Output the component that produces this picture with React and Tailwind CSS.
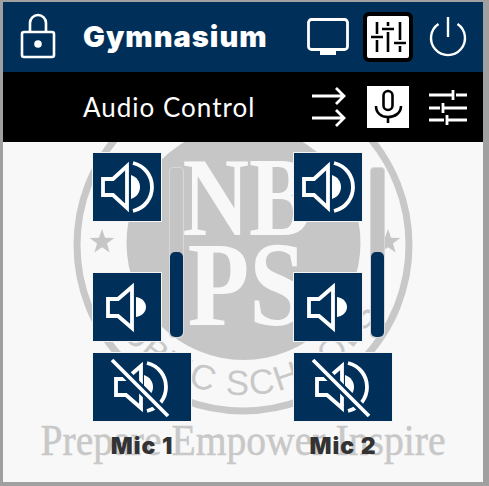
import React from 'react';

const NAVY = '#003059';

const Lock = () => (
  <svg width="36" height="48" viewBox="0 0 36 48" fill="none" stroke="white" strokeWidth="2.6">
    <rect x="2" y="19" width="32" height="25" rx="2" />
    <path d="M10 19V10a8 8 0 0 1 16 0v9" />
    <circle cx="18" cy="31" r="3.8" fill="white" stroke="none" />
  </svg>
);

const Monitor = () => (
  <svg width="42" height="38" viewBox="0 0 42 38" fill="none">
    <rect x="1.5" y="1.5" width="39" height="30" rx="3" stroke="white" strokeWidth="2.8" />
    <rect x="13" y="32" width="16" height="5" fill="white" />
  </svg>
);

const Mixer = () => (
  <svg width="42" height="42" viewBox="0 0 42 42" stroke="black" strokeWidth="2.6" fill="none">
    <path d="M10 6v12M10 24v12M21 6v4M21 16v20M33 6v18M33 30v6" />
    <path d="M4 21h12M15 13h12M27 27h12" />
  </svg>
);

const Power = () => (
  <svg width="40" height="40" viewBox="0 0 40 40" fill="none" stroke="white" strokeWidth="2.4">
    <path d="M10.5 7A17 17 0 1 0 29.5 7" />
    <path d="M20 0v20" />
  </svg>
);

const Arrows = () => (
  <svg width="36" height="40" viewBox="0 0 36 40" fill="none" stroke="white" strokeWidth="2.8">
    <path d="M1 9h32M25 1l8 8-8 8" />
    <path d="M1 31h32M25 23l8 8-8 8" />
  </svg>
);

const Mic = () => (
  <svg width="42" height="42" viewBox="0 0 42 42" fill="none" stroke="black" strokeWidth="2.6">
    <rect x="16.5" y="5" width="9" height="19" rx="4.5" />
    <path d="M9 20c0 7 5 11 12 11s13-4 13-11" />
    <path d="M21 31v6" />
  </svg>
);

const Sliders = () => (
  <svg width="40" height="36" viewBox="0 0 40 36" fill="none" stroke="white" strokeWidth="2.8">
    <path d="M1 6h24M25 1v10M28 6h11" />
    <path d="M1 19h11M15 14v10M15 19h24" />
    <path d="M1 31h15M19 26v10M19 31h20" />
  </svg>
);

const VolUp = () => (
  <svg width="68" height="68" viewBox="0 0 68 68" fill="none">
    <path d="M10 26h10L34 13v42L20 42H10z" stroke="white" strokeWidth="3.8" />
    <path d="M38 22c6 2 9 7 9 12s-3 10-9 12z" fill="white" />
    <path d="M40 10c12 3 19 13 19 24s-7 21-19 24" stroke="white" strokeWidth="3.8" />
  </svg>
);

const VolDown = () => (
  <svg width="68" height="68" viewBox="0 0 68 68" fill="none">
    <path d="M15 26h10L39 14v41L25 43H15z" stroke="white" strokeWidth="3.8" />
    <path d="M43 24c6 1 10 5 10 10s-4 9-10 10z" fill="white" />
  </svg>
);

const Mute = () => (
  <svg width="98" height="68" viewBox="0 0 98 68" fill="none">
    <path d="M23 26h10L48 13v42L33 42H23z" stroke="white" strokeWidth="3.8" />
    <path d="M51 22c6 2 9 7 9 12s-3 10-9 12z" fill="white" />
    <path d="M54 10c12 3 19 13 19 24s-7 21-19 24" stroke="white" strokeWidth="3.8" />
    <path d="M19 7l56 56" stroke={NAVY} strokeWidth="9" />
    <path d="M19 7l56 56" stroke="white" strokeWidth="3.8" />
  </svg>
);

const IconButton = ({ children, className }) => (
  <button className={`flex items-center justify-center h-[70px] border border-[#f4f4f4] bg-[#003059] ${className}`}>
    {children}
  </button>
);

const MicStrip = ({ name }) => (
  <div className="flex flex-col w-[100px]">
    <div className="flex h-[190px] items-start">
      <div className="flex flex-col justify-between h-[190px]">
        <IconButton className="w-[70px]"><VolUp /></IconButton>
        <IconButton className="w-[70px]"><VolDown /></IconButton>
      </div>
      <div className="relative ml-[7px] mt-[15px] w-[15px] h-[171px] rounded-[4px] bg-[#c4c4c4] border border-[#d8d8d8] overflow-hidden">
        <div className="absolute bottom-0 left-0 right-0 h-[85px] rounded-[5px] bg-[#003059]" />
      </div>
    </div>
    <IconButton className="w-[100px] mt-[10px]"><Mute /></IconButton>
    <div className="mt-[10px] text-center text-[23px] leading-[28px] font-black tracking-[1px] text-[#333333] font-['Inter',sans-serif]">
      {name}
    </div>
  </div>
);

const Star = ({ cx, cy }) => {
  const pts = [];
  for (let i = 0; i < 10; i++) {
    const r = i % 2 ? 5.2 : 13;
    const a = (Math.PI / 5) * i - Math.PI / 2;
    pts.push(`${cx + r * Math.cos(a)},${cy + r * Math.sin(a)}`);
  }
  return <polygon points={pts.join(' ')} fill="#c6c6c6" />;
};

// school seal sitting behind the controls
const Watermark = () => (
  <svg className="absolute left-0 top-0" width="480" height="340" viewBox="0 0 480 340">
    <defs>
      <path id="bottomArc" d="M90 103a150 150 0 0 0 300 0" />
    </defs>
    <circle cx="240" cy="103" r="166" fill="none" stroke="#c8c8c8" strokeWidth="7" />
    <circle cx="240.5" cy="101" r="117" fill="#c6c6c6" />
    <text x="243.5" y="93" textAnchor="middle" fontFamily="Liberation Serif" fontWeight="700" fontSize="113" textLength="128" lengthAdjust="spacingAndGlyphs" fill="#f8f8f8">NB</text>
    <text x="243.5" y="183" textAnchor="middle" fontFamily="Liberation Serif" fontWeight="700" fontSize="120" textLength="118" lengthAdjust="spacingAndGlyphs" fill="#f8f8f8">PS</text>
    <Star cx={99} cy={100} />
    <Star cx={385} cy={100} />
    <text fontFamily="Liberation Sans" fontSize="35" letterSpacing="2" fill="#c8c8c8">
      <textPath href="#bottomArc" startOffset="50%" textAnchor="middle">PUBLIC SCHOOLS</textPath>
    </text>
    <text x="240" y="313" textAnchor="middle" fontFamily="Liberation Serif" fontSize="44" textLength="405" lengthAdjust="spacingAndGlyphs" fill="#c8c8c8" stroke="#c8c8c8" strokeWidth="0.5">Prepare Empower Inspire</text>
  </svg>
);

export default function App() {
  return (
    <div className="w-[489px] h-[486px] bg-[#a0a0a0] pl-[3px] pr-[6px] pt-[2px] pb-[4px] overflow-hidden">
      <div className="flex h-[70px] items-center bg-[#003059] pl-[17px] pr-[15px]">
        <Lock />
        <h1 className="ml-[27px] text-[29px] font-black tracking-[1px] text-white font-['Inter',sans-serif]">Gymnasium</h1>
        <div className="ml-auto flex items-center">
          <Monitor />
          <div className="ml-[14px] flex items-center justify-center w-[50px] h-[50px] rounded-[6px] border-[4px] border-black bg-white">
            <Mixer />
          </div>
          <div className="ml-[15px]"><Power /></div>
        </div>
      </div>
      <div className="flex h-[70px] items-center bg-black pl-[80px] pr-[15px]">
        <h2 className="text-[26px] tracking-[1px] text-white font-['Lato',sans-serif]">Audio Control</h2>
        <div className="ml-auto flex items-center">
          <Arrows />
          <div className="ml-[20px] flex items-center justify-center w-[42px] h-[42px] bg-white"><Mic /></div>
          <div className="ml-[19px]"><Sliders /></div>
        </div>
      </div>
      <div className="relative h-[340px] bg-[#f8f8f8] overflow-hidden">
        <Watermark />
        <div className="relative flex gap-[101px] pl-[89px] pt-[10px]">
          <MicStrip name="Mic 1" />
          <MicStrip name="Mic 2" />
        </div>
      </div>
    </div>
  );
}
